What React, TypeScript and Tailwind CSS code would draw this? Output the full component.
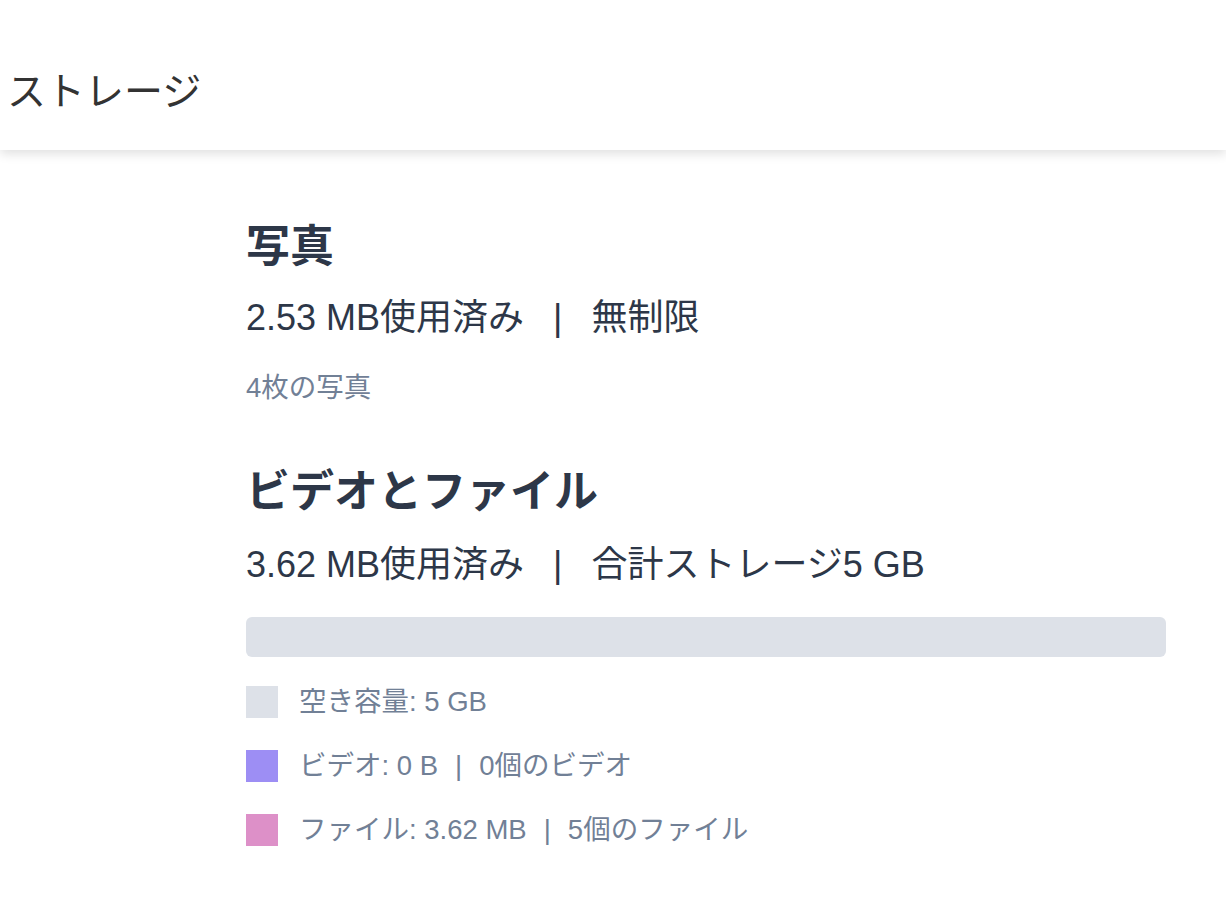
import React from "react";

const font = "font-['Liberation_Sans','Noto_Sans_CJK_JP',sans-serif]";

const legend = [
  { color: "bg-[#dde1e8]", label: "空き容量: 5 GB" },
  { color: "bg-[#9d8ef4]", label: "ビデオ: 0 B", extra: "0個のビデオ" },
  { color: "bg-[#dd90c8]", label: "ファイル: 3.62 MB", extra: "5個のファイル" },
];

function UsageLine({ used, right }: { used: string; right: string }) {
  return (
    <div className="text-[36px] leading-[44px] h-[44px] text-[#2d3748] whitespace-nowrap">
      {used}
      <span className="mx-[29px]">|</span>
      {right}
    </div>
  );
}

export default function App() {
  return (
    <div className={`${font} bg-white min-h-[909px] w-full overflow-hidden`}>
      {/* header */}
      <div className="h-[150px] bg-white shadow-[0_4px_10px_rgba(0,0,0,0.12)] relative z-10 pt-[72px] pl-[7px]">
        <div className="text-[39px] leading-[40px] text-[#333333]">ストレージ</div>
      </div>

      <div className="pl-[246px] pr-[60px] pt-[72px] pb-10">
        {/* 写真 */}
        <div className="text-[44px] leading-[50px] h-[50px] font-bold text-[#2d3748]">写真</div>
        <div className="mt-[24px]">
          <UsageLine used="2.53 MB使用済み" right="無制限" />
        </div>
        <div className="mt-[31px] text-[27.5px] leading-[34px] h-[34px] text-[#718096]">4枚の写真</div>

        {/* ビデオとファイル */}
        <div className="mt-[62px] text-[44px] leading-[50px] h-[50px] font-bold text-[#2d3748]">ビデオとファイル</div>
        <div className="mt-[26px]">
          <UsageLine used="3.62 MB使用済み" right="合計ストレージ5 GB" />
        </div>

        <div className="mt-[30px] h-[40px] w-full rounded-[6px] bg-[#dde1e8]" />

        <div className="mt-[29px] flex flex-col gap-[32px]">
          {legend.map((item) => (
            <div key={item.label} className="flex items-center h-[32px]">
              <div className={`w-[32px] h-[32px] shrink-0 ${item.color}`} />
              <div className="ml-[21px] text-[27.5px] leading-[32px] text-[#718096] whitespace-nowrap">
                {item.label}
                {item.extra && (
                  <>
                    <span className="mx-[17px]">|</span>
                    {item.extra}
                  </>
                )}
              </div>
            </div>
          ))}
        </div>
      </div>
    </div>
  );
}
